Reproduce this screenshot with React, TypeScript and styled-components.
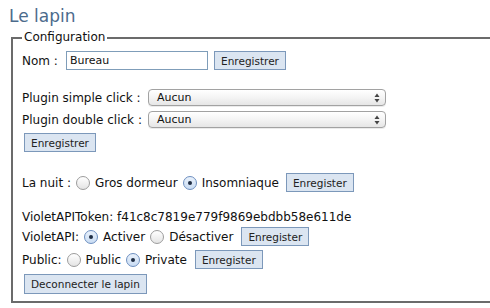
import React from "react";
import styled, { createGlobalStyle } from "styled-components";

const Global = createGlobalStyle`
  html, body { margin: 0; padding: 0; background: #fff; overflow: hidden; }
  body { font-family: "DejaVu Sans", Verdana, sans-serif; color: #111; }
`;

const Page = styled.div`
  width: 490px;
  height: 308px;
  overflow: hidden;
`;

const Title = styled.h1`
  margin: 0;
  padding: 4px 0 0 9px;
  height: 24px;
  font-size: 17px;
  line-height: 25px;
  font-weight: normal;
  color: #4c6b8c;
`;

const Fieldset = styled.fieldset`
  margin: 2px 0 0 11px;
  width: 520px;
  box-sizing: border-box;
  border: 2px solid #6b6b6b;
  padding: 6px 0 7px 9px;
  height: 273px;
`;

const Legend = styled.legend`
  font-size: 12px;
  line-height: 15px;
  padding: 0 2px;
  margin-left: 0;
`;

const Body = styled.div`
  display: flex;
  flex-direction: column;
  font-size: 12px;
`;

const Row = styled.div<{ $top?: number; $h?: number }>`
  display: flex;
  align-items: center;
  height: ${(p) => p.$h ?? 19}px;
  margin-top: ${(p) => p.$top ?? 0}px;
  white-space: nowrap;
`;

const Label = styled.span<{ $w?: number }>`
  ${(p) => (p.$w ? `width: ${p.$w}px;` : "")}
  flex: none;
`;

const Button = styled.button<{ $ml?: number; $w?: number; $h?: number }>`
  font-family: "DejaVu Sans", Verdana, sans-serif;
  font-size: 10.5px;
  color: #222;
  background: #dbe5f1;
  border: 1px solid #7c98ba;
  height: ${(p) => p.$h ?? 19}px;
  padding: 0 6px;
  margin: 0 0 0 ${(p) => p.$ml ?? 0}px;
  ${(p) => (p.$w ? `width: ${p.$w}px;` : "")}
  box-sizing: border-box;
  flex: none;
`;

const Input = styled.input`
  font-family: "DejaVu Sans", Verdana, sans-serif;
  font-size: 11px;
  width: 142px;
  height: 19px;
  box-sizing: border-box;
  border: 1px solid #7f9db9;
  padding: 0 3px;
  margin: 0;
  color: #111;
`;

const Select = styled.div`
  position: relative;
  width: 238px;
  height: 17px;
  box-sizing: border-box;
  border: 1px solid #a2a2a2;
  border-radius: 4px;
  background: linear-gradient(#ffffff, #f4f4f4 50%, #e6e6e6);
  font-size: 11px;
  line-height: 15px;
  padding-left: 8px;
  box-shadow: 0 1px 0 rgba(0, 0, 0, 0.08);
`;

const Arrows = styled.svg`
  position: absolute;
  right: 5px;
  top: 3px;
`;

const RadioDot = styled.span<{ $on?: boolean }>`
  display: inline-flex;
  align-items: center;
  justify-content: center;
  width: 14px;
  height: 14px;
  box-sizing: border-box;
  border-radius: 50%;
  border: 1px solid ${(p) => (p.$on ? "#6d8fc0" : "#9c9c9c")};
  background: ${(p) =>
    p.$on
      ? "linear-gradient(#e9f1fb, #c9dcf3)"
      : "linear-gradient(#ffffff, #e4e4e4)"};
  margin: 0 5px 0 5px;
  flex: none;
  &::after {
    content: "";
    display: ${(p) => (p.$on ? "block" : "none")};
    width: 4px;
    height: 4px;
    border-radius: 50%;
    background: #1f2e44;
  }
`;

const Radio = ({ on, label }: { on?: boolean; label: string }) => (
  <>
    <RadioDot $on={on} />
    <Label>{label}</Label>
  </>
);

const Sel = ({ value }: { value: string }) => (
  <Select>
    {value}
    <Arrows width="6" height="10" viewBox="0 0 6 10">
      <path d="M3 0.5 L5.5 4 H0.5 Z" fill="#444" />
      <path d="M3 9.5 L5.5 6 H0.5 Z" fill="#444" />
    </Arrows>
  </Select>
);

export default function App() {
  return (
    <Page>
      <Global />
      <Title>Le lapin</Title>
      <Fieldset>
        <Legend>Configuration</Legend>
        <Body>
          <Row>
            <Label $w={44}>Nom :</Label>
            <Input defaultValue="Bureau" />
            <Button $ml={6} $w={72}>Enregistrer</Button>
          </Row>
          <Row $top={19} $h={17}>
            <Label $w={126}>Plugin simple click :</Label>
            <Sel value="Aucun" />
          </Row>
          <Row $top={5} $h={17}>
            <Label $w={126}>Plugin double click :</Label>
            <Sel value="Aucun" />
          </Row>
          <Row $top={5}>
            <Button $ml={2} $w={72}>Enregistrer</Button>
          </Row>
          <Row $top={21}>
            <Label>La nuit :</Label>
            <Radio label="Gros dormeur" />
            <Radio on label="Insomniaque" />
            <Button $ml={7}>Enregister</Button>
          </Row>
          <Row $top={17} $h={15}>
            <Label>VioletAPIToken: f41c8c7819e779f9869ebdbb58e611de</Label>
          </Row>
          <Row $top={3}>
            <Label>VioletAPI:</Label>
            <Radio on label="Activer" />
            <Radio label="Désactiver" />
            <Button $ml={8}>Enregister</Button>
          </Row>
          <Row $top={4}>
            <Label>Public:</Label>
            <Radio label="Public" />
            <Radio on label="Private" />
            <Button $ml={8}>Enregister</Button>
          </Row>
          <Row $top={5} $h={20}>
            <Button $ml={2} $h={20}>Deconnecter le lapin</Button>
          </Row>
        </Body>
      </Fieldset>
    </Page>
  );
}
